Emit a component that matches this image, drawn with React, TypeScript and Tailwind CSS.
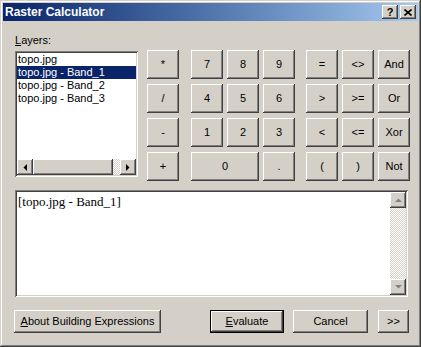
import React from 'react';

const raised =
  'shadow-[inset_-1px_-1px_#404040,inset_1px_1px_#ffffff,inset_-2px_-2px_#808080,inset_2px_2px_#d4d0c8]';
const sunken =
  'shadow-[inset_1px_1px_#808080,inset_-1px_-1px_#ffffff,inset_2px_2px_#404040,inset_-2px_-2px_#d4d0c8]';
const dither =
  'bg-[repeating-conic-gradient(#d4d0c8_0%_25%,#ffffff_0%_50%)] bg-[length:2px_2px]';

const Arrow: React.FC<{ dir: 'up' | 'down' | 'left' | 'right'; disabled?: boolean }> = ({ dir, disabled }) => {
  const pts = {
    up: '0,4 7,4 3.5,0.5',
    down: '0,0 7,0 3.5,3.5',
    left: '4,0 4,7 0.5,3.5',
    right: '0,0 0,7 3.5,3.5',
  }[dir];
  const horiz = dir === 'left' || dir === 'right';
  return (
    <div className={`w-[16px] h-[16px] bg-[#d4d0c8] flex items-center justify-center ${raised}`}>
      <svg width={horiz ? 4 : 7} height={horiz ? 7 : 4} viewBox={horiz ? '0 0 4 7' : '0 0 7 4'}>
        <polygon points={pts} fill={disabled ? '#808080' : '#000'} />
      </svg>
    </div>
  );
};

const Key: React.FC<{ label: string; className?: string }> = ({ label, className = '' }) => (
  <div
    className={`h-[29px] w-[32px] bg-[#d4d0c8] flex items-center justify-center text-[11px] text-black ${raised} ${className}`}
  >
    {label}
  </div>
);

const Button: React.FC<{ children: React.ReactNode; className?: string; isDefault?: boolean }> = ({
  children,
  className = '',
  isDefault,
}) => (
  <div
    className={`h-[23px] bg-[#d4d0c8] flex items-center justify-center text-[11px] text-black ${raised} ${
      isDefault ? 'border border-black' : ''
    } ${className}`}
  >
    {children}
  </div>
);

const layers = ['topo.jpg', 'topo.jpg - Band_1', 'topo.jpg - Band_2', 'topo.jpg - Band_3'];

export default function App() {
  return (
    <div
      className={`w-[421px] h-[347px] bg-[#d4d0c8] p-[3px] flex flex-col select-none shadow-[inset_-1px_-1px_#404040,inset_1px_1px_#d4d0c8,inset_-2px_-2px_#808080,inset_2px_2px_#ffffff]`}
      style={{ fontFamily: '"Liberation Sans", Arial, sans-serif' }}
    >
      {/* title bar */}
      <div className="h-[18px] flex items-center bg-linear-to-r from-[#0a246a] to-[#a6caf0] pl-[2px]">
        <span className="text-[12px] font-bold text-white leading-none">Raster Calculator</span>
        <div className="ml-auto flex items-center">
          <div className={`w-[16px] h-[14px] bg-[#d4d0c8] flex items-center justify-center ${raised}`}>
            <span className="text-[11px] font-bold leading-none text-black">?</span>
          </div>
          <div className={`ml-[2px] mr-[2px] w-[16px] h-[14px] bg-[#d4d0c8] flex items-center justify-center ${raised}`}>
            <svg width="8" height="7" viewBox="0 0 8 7">
              <path d="M0.5 0.5 L7.5 6.5 M7.5 0.5 L0.5 6.5" stroke="#000" strokeWidth="1.6" />
            </svg>
          </div>
        </div>
      </div>

      <div className="flex flex-col pl-[12px]">
        <div className="mt-[13px] h-[13px] leading-[13px] text-[11px] text-black">
          <span className="underline">L</span>ayers:
        </div>

        <div className="mt-[3px] flex">
          {/* layer list */}
          <div className={`mt-[1px] w-[123px] h-[126px] bg-white p-[2px] flex flex-col ${sunken}`}>
            <div className="flex-1 flex flex-col">
              {layers.map((l, i) => (
                <div
                  key={l}
                  className={`h-[13px] leading-[13px] text-[11px] pl-[1px] ${
                    i === 1 ? 'bg-[#0a246a] text-white' : 'text-black'
                  }`}
                >
                  {l}
                </div>
              ))}
            </div>
            <div className="flex h-[16px]">
              <Arrow dir="left" />
              <div className={`w-[80px] h-[16px] bg-[#d4d0c8] ${raised}`} />
              <div className={`flex-1 ${dither}`} />
              <Arrow dir="right" />
            </div>
          </div>

          {/* operators */}
          <div className="ml-[9px] flex flex-col gap-[5px]">
            <Key label="*" />
            <Key label="/" />
            <Key label="-" />
            <Key label="+" />
          </div>

          {/* digits */}
          <div className="ml-[12px] grid grid-cols-[32px_32px_32px] gap-x-[4px] gap-y-[5px]">
            <Key label="7" />
            <Key label="8" />
            <Key label="9" />
            <Key label="4" />
            <Key label="5" />
            <Key label="6" />
            <Key label="1" />
            <Key label="2" />
            <Key label="3" />
            <Key label="0" className="col-span-2 w-[68px]" />
            <Key label="." />
          </div>

          {/* comparison / logic */}
          <div className="ml-[11px] grid grid-cols-[32px_32px_32px] gap-x-[4px] gap-y-[5px]">
            <Key label="=" />
            <Key label="<>" />
            <Key label="And" />
            <Key label=">" />
            <Key label=">=" />
            <Key label="Or" />
            <Key label="<" />
            <Key label="<=" />
            <Key label="Xor" />
            <Key label="(" />
            <Key label=")" />
            <Key label="Not" />
          </div>
        </div>

        {/* expression box */}
        <div className={`mt-[9px] w-[393px] h-[107px] bg-white p-[2px] flex ${sunken}`}>
          <div
            className="flex-1 text-[13px] leading-[16px] text-black pl-[1px] pt-[2px]"
            style={{ fontFamily: '"Liberation Serif", "Times New Roman", serif' }}
          >
            [topo.jpg - Band_1]
          </div>
          <div className="w-[16px] flex flex-col">
            <Arrow dir="up" disabled />
            <div className={`flex-1 ${dither}`} />
            <Arrow dir="down" disabled />
          </div>
        </div>

        {/* bottom buttons */}
        <div className="mt-[13px] -ml-[1px] flex">
          <Button className="w-[147px]">
            <span>
              <span className="underline">A</span>bout Building Expressions
            </span>
          </Button>
          <Button className="ml-[49px] w-[74px]" isDefault>
            <span>
              <span className="underline">E</span>valuate
            </span>
          </Button>
          <Button className="ml-[9px] w-[75px]">Cancel</Button>
          <Button className="ml-[10px] w-[31px]">&gt;&gt;</Button>
        </div>
      </div>
    </div>
  );
}
